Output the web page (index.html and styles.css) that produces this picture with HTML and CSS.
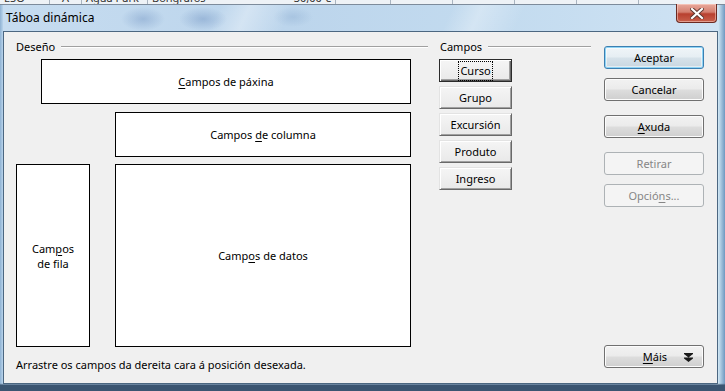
FILE: index.html
```html
<!DOCTYPE html>
<html lang="gl">
<head>
    <meta charset="UTF-8">
    <meta name="viewport" content="width=device-width, initial-scale=1.0">
    <title>Táboa dinámica</title>
    <link rel="stylesheet" href="styles.css">
</head>
<body>
    <div class="screen">
        <div class="sheet">
            <div class="sheet-row">
                <span class="cell c-curso">ESO</span>
                <span class="cell c-grupo">A</span>
                <span class="cell c-exc">Agua Park</span>
                <span class="cell c-prod">Bongrafos</span>
                <span class="cell c-ing">30,00 €</span>
                <span class="cell c-e first"></span>
                <span class="cell c-e"></span>
                <span class="cell c-e"></span>
                <span class="cell c-e"></span>
                <span class="cell c-e"></span>
            </div>
        </div>
        <div class="window">
            <div class="titlebar">
                <span class="title">Táboa dinámica</span>
                <button class="close" aria-label="Pechar">
                    <svg width="14" height="11" viewBox="0 0 14 11">
                        <path d="M2 1 L12 10 M12 1 L2 10" stroke="#5b3630" stroke-width="4" stroke-linecap="square"/>
                        <path d="M2 1 L12 10 M12 1 L2 10" stroke="#fff" stroke-width="2.2" stroke-linecap="square"/>
                    </svg>
                </button>
            </div>
            <div class="client">
                <section class="layout">
                    <div class="group-head"><span>Deseño</span><span class="rule"></span></div>
                    <div class="drop page"><span><u>C</u>ampos de páxina</span></div>
                    <div class="drop column"><span>Campos <u>d</u>e columna</span></div>
                    <div class="drop-row">
                        <div class="drop row-fields"><span>Cam<u>p</u>os<br>de fila</span></div>
                        <div class="drop data"><span>Camp<u>o</u>s de datos</span></div>
                    </div>
                    <p class="hint">Arrastre os campos da dereita cara á posición desexada.</p>
                </section>

                <section class="fields">
                    <div class="group-head"><span>Campos</span><span class="rule"></span></div>
                    <div class="field-list">
                        <button class="field default"><span class="focus">Curso</span></button>
                        <button class="field">Grupo</button>
                        <button class="field">Excursión</button>
                        <button class="field">Produto</button>
                        <button class="field">Ingreso</button>
                    </div>
                </section>

                <div class="actions">
                    <button class="btn primary">Aceptar</button>
                    <button class="btn cancel">Cancelar</button>
                    <button class="btn help"><u>A</u>xuda</button>
                    <button class="btn remove" disabled>Retirar</button>
                    <button class="btn options" disabled>Opció<u>n</u>s...</button>
                    <button class="btn more">
                        <span class="more-label"><u>M</u>áis</span>
                        <svg class="more-icon" width="9" height="9" viewBox="0 0 9 9">
                            <path d="M0 0 H9 V1 L4.5 4.5 L0 1 Z M0 4.5 H9 V5.5 L4.5 9 L0 5.5 Z" fill="#1a1a1a"/>
                        </svg>
                    </button>
                </div>
            </div>
        </div>
    </div>
</body>
</html>
```

FILE: styles.css
```css
* {
    box-sizing: border-box;
}
body {
    margin: 0;
    width: 725px;
    height: 391px;
    overflow: hidden;
    font-family: "Noto Sans", "Open Sans", sans-serif;
    font-size: 11px;
    color: #000;
    background: #9fbfdc;
}
button {
    font-family: inherit;
    font-size: 11px;
    color: #000;
    padding: 0;
    margin: 0;
    cursor: default;
}
u {
    text-decoration-thickness: 1px;
    text-underline-offset: 2px;
}
.screen {
    display: flex;
    flex-direction: column;
    height: 391px;
}

/* spreadsheet behind the dialog */
.sheet {
    flex-shrink: 0;
    height: 5px;
    overflow: hidden;
    background: #eef2f6;
    border-bottom: 1px solid #7d8b9b;
}
.sheet-row {
    display: flex;
    height: 16px;
    margin-top: -10px;
    line-height: 16px;
    color: #333;
}
.cell {
    border-right: 1px solid #a9b4c0;
    padding: 0 4px;
    white-space: nowrap;
}
.c-curso { width: 50px; }
.c-grupo { width: 32px; text-align: center; }
.c-exc { width: 66px; }
.c-prod { width: 62px; border-right: none; }
.c-ing { width: 126px; text-align: right; }
.c-e { width: 62px; }
.c-e.first { width: 55px; }

/* dialog window */
.window {
    flex: 1;
    display: flex;
    flex-direction: column;
    padding: 0 7px 7px 3px;
    background:
        linear-gradient(to bottom, rgba(0,0,0,0) 98%, #3b5571 98.5%),
        linear-gradient(to right, #8fb2d3 0, #b9d4ec 3px, #b9d4ec 98%, #d6ecf8 99%, #6f98c0 100%);
}
.titlebar {
    flex-shrink: 0;
    position: relative;
    height: 26px;
    display: flex;
    align-items: center;
    padding: 0 0 1px 3px;
    background:
        radial-gradient(ellipse 22px 12px at 140px 14px, rgba(70,110,170,0.28), rgba(70,110,170,0)),
        radial-gradient(ellipse 24px 12px at 200px 14px, rgba(70,110,170,0.3), rgba(70,110,170,0)),
        radial-gradient(ellipse 20px 10px at 290px 12px, rgba(90,130,180,0.2), rgba(90,130,180,0)),
        linear-gradient(115deg, rgba(255,255,255,0) 30%, rgba(255,255,255,0.35) 34%, rgba(255,255,255,0) 40%),
        linear-gradient(115deg, rgba(255,255,255,0) 62%, rgba(255,255,255,0.3) 66%, rgba(255,255,255,0) 72%),
        linear-gradient(to right, #c6dcf0, #bcd5ec 40%, #c3dbef 70%, #cfe3f4);
}
.title {
    font-size: 12px;
    color: #000;
}
.close {
    position: absolute;
    top: -1px;
    right: 1px;
    width: 41px;
    height: 19px;
    border: 1px solid #6b2a22;
    border-top: none;
    border-radius: 0 0 4px 4px;
    background: linear-gradient(to bottom, #e9a99c 0%, #d47f70 45%, #b8402f 55%, #c8604c 100%);
    box-shadow: inset 0 0 0 1px rgba(255,220,210,0.5);
    display: flex;
    align-items: center;
    justify-content: center;
}

/* client area */
.client {
    flex: 1;
    display: flex;
    min-height: 0;
    background: #f0f0f0;
    border: 1px solid #4c6781;
    padding: 7px 0 0 12px;
}
.group-head {
    display: flex;
    align-items: center;
    height: 15px;
    line-height: 15px;
}
.group-head .rule {
    flex: 1;
    height: 2px;
    margin-left: 6px;
    margin-top: 1px;
    border-top: 1px solid #a0a0a0;
    border-bottom: 1px solid #fff;
}

.layout {
    width: 412px;
}
.drop {
    display: flex;
    align-items: center;
    justify-content: center;
    text-align: center;
    line-height: 15px;
    background: #fff;
    border: 1px solid #000;
}
.page {
    margin: 5px 0 0 25px;
    width: 370px;
    height: 45px;
}
.column {
    margin: 8px 0 0 99px;
    width: 296px;
    height: 45px;
}
.drop-row {
    display: flex;
    margin-top: 7px;
    height: 183px;
}
.row-fields {
    width: 74px;
}
.data {
    width: 296px;
    margin-left: 25px;
}
.hint {
    margin: 10px 0 0;
    line-height: 15px;
}

.fields {
    width: 151px;
    margin-left: 12px;
}
.field-list {
    display: flex;
    flex-direction: column;
    gap: 4px;
    margin-top: 5px;
}
.field {
    width: 73px;
    height: 23px;
    margin-left: -1px;
    border: 1px solid;
    border-color: #e3e3e3 #696969 #696969 #e3e3e3;
    box-shadow: inset 1px 1px 0 #fff, inset -1px -1px 0 #a0a0a0;
    background: linear-gradient(to bottom, #f5f5f5, #e9e9e9);
    line-height: 15px;
}
.field.default {
    border-color: #2b2b2b;
    box-shadow: inset 1px 1px 0 #fff, inset -1px -1px 0 #696969, inset -2px -2px 0 #a0a0a0;
}
.focus {
    outline: 1px dotted #000;
    outline-offset: 0;
    padding: 1px 1px 2px;
}

.actions {
    width: 100px;
    margin-left: 13px;
    padding: 7px 0 15px;
    display: flex;
    flex-direction: column;
}
.btn {
    height: 23px;
    width: 100px;
    flex-shrink: 0;
    border: 1px solid #707070;
    border-radius: 3px;
    background: linear-gradient(to bottom, #f2f2f2 0%, #ebebeb 48%, #dddddd 52%, #cfcfcf 100%);
    box-shadow: inset 0 0 0 1px #fcfcfc;
    line-height: 15px;
}
.btn.primary {
    border-color: #3c7fb1;
    background: linear-gradient(to bottom, #f0f5f8 0%, #e6eef3 48%, #d6e2ea 52%, #c8d6e0 100%);
    box-shadow: inset 0 0 0 1px #8fd4f5, inset 0 0 0 2px rgba(255,255,255,0.5);
}
.cancel { margin-top: 9px; }
.help { margin-top: 14px; }
.remove { margin-top: 14px; }
.options { margin-top: 9px; }
.btn:disabled {
    border-color: #adb2b5;
    background: #f4f4f4;
    box-shadow: none;
    color: #868686;
}
.btn.more {
    margin-top: auto;
    display: grid;
    grid-template-columns: 1fr auto 1fr;
    align-items: center;
}
.more-label {
    grid-column: 2;
    padding-left: 2px;
}
.more-icon {
    grid-column: 3;
    justify-self: start;
    margin-left: 17px;
    margin-top: 1px;
}
```
